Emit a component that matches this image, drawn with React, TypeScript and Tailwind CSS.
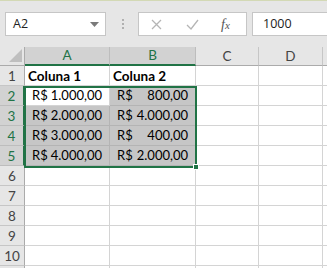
import React from 'react';

type Money = { v: string };

const data: Money[][] = [
  [{ v: '1.000,00' }, { v: '800,00' }],
  [{ v: '2.000,00' }, { v: '4.000,00' }],
  [{ v: '3.000,00' }, { v: '400,00' }],
  [{ v: '4.000,00' }, { v: '2.000,00' }],
];

const cols = ['A', 'B', 'C', 'D'];

const MoneyCell: React.FC<{ value: string; active?: boolean }> = ({ value, active }) => (
  <div
    className={`flex items-center justify-between gap-[3px] px-[7px] pt-[1px] border-b border-r text-[13px] text-black whitespace-nowrap ${
      active ? 'bg-white border-[#d4d4d4]' : 'bg-[#c6c6c6] border-[#b4b4b4]'
    }`}
  >
    <span>R$</span>
    <span>{value}</span>
  </div>
);

const RowHead: React.FC<{ n?: number; sel?: boolean }> = ({ n, sel }) => (
  <div
    className={`flex items-center justify-center pt-[1px] border-b text-[13.5px] ${
      sel
        ? 'bg-[#d2d2d2] text-[#217346] border-b-[#bdbdbd] border-r-2 border-r-[#217346]'
        : 'bg-[#e6e6e6] text-[#444] border-b-[#c6c6c6] border-r border-r-[#ababab]'
    }`}
  >
    {n}
  </div>
);

const Empty: React.FC = () => <div className="border-b border-r border-[#d4d4d4] bg-white" />;

export default function App() {
  return (
    <div className="relative w-[327px] h-[268px] overflow-hidden bg-[#e6e6e6] font-['Lato','Liberation_Sans',sans-serif] border-t border-[#d3d9b5]">
      {/* formula bar */}
      <div className="flex items-center h-[46px] pl-[5px] py-[11px]">
        <div className="flex items-center justify-between w-[101px] h-[24px] bg-white border border-[#c6c6c6] pl-[7px] pr-[6px]">
          <span className="text-[12.5px] text-[#222] font-['Open_Sans',sans-serif]">A2</span>
          <svg width="9" height="5" viewBox="0 0 9 5">
            <path d="M0 0 L9 0 L4.5 5 Z" fill="#7a7a7a" />
          </svg>
        </div>
        <div className="flex flex-col gap-[2px] ml-[16px] mr-[14px]">
          <span className="w-[2px] h-[2px] bg-[#b0b0b0]" />
          <span className="w-[2px] h-[2px] bg-[#b0b0b0]" />
          <span className="w-[2px] h-[2px] bg-[#b0b0b0]" />
        </div>
        <div className="flex items-center w-[109px] h-[24px] bg-white border border-[#c6c6c6]">
          <svg className="ml-[12px]" width="11" height="11" viewBox="0 0 11 11">
            <path d="M1 1 L10 10 M10 1 L1 10" stroke="#b5b5b5" strokeWidth="1.3" />
          </svg>
          <svg className="ml-[24px]" width="13" height="11" viewBox="0 0 13 11">
            <path d="M1 6 L5 10 L12 1" stroke="#b5b5b5" strokeWidth="1.3" fill="none" />
          </svg>
          <span className="ml-[22px] text-[14px] italic text-[#555] font-['Liberation_Serif',serif]">
            f<span className="text-[11px]">x</span>
          </span>
        </div>
        <div className="flex items-center flex-1 h-[24px] ml-[5px] bg-white border border-[#c6c6c6] border-r-0 pl-[10px]">
          <span className="text-[12.5px] text-[#222] font-['Open_Sans',sans-serif]">1000</span>
        </div>
      </div>

      {/* grid */}
      <div className="grid grid-cols-[25px_85px_86px_63px_64px_4px] grid-rows-[19px_repeat(11,20px)] bg-white">
        <div className="relative bg-[#e6e6e6] border-b border-r border-[#ababab]">
          <svg className="absolute right-[2px] bottom-[3px]" width="13" height="13" viewBox="0 0 13 13">
            <path d="M13 0 L13 13 L0 13 Z" fill="#bfbfbf" />
          </svg>
        </div>
        {cols.map((c, i) => (
          <div
            key={c}
            className={`flex items-center justify-center text-[13.5px] border-r ${
              i < 2
                ? 'bg-[#d2d2d2] text-[#217346] border-b-2 border-b-[#217346] border-r-[#bdbdbd]'
                : 'bg-[#e6e6e6] text-[#444] border-b border-b-[#ababab] border-r-[#c6c6c6]'
            }`}
          >
            {c}
          </div>
        ))}
        <div className="bg-[#e6e6e6] border-b border-[#ababab]" />

        {/* row 1 */}
        <RowHead n={1} />
        <div className="flex items-center pl-[3px] pt-[1px] border-b border-r border-[#d4d4d4] text-[13.5px] font-bold text-black whitespace-nowrap">
          Coluna 1
        </div>
        <div className="flex items-center pl-[3px] pt-[1px] border-b border-r border-[#d4d4d4] text-[13.5px] font-bold text-black whitespace-nowrap">
          Coluna 2
        </div>
        <Empty />
        <Empty />
        <div className="border-b border-[#d4d4d4]" />

        {data.map((r, ri) => (
          <React.Fragment key={ri}>
            <RowHead n={ri + 2} sel />
            <MoneyCell value={r[0].v} active={ri === 0} />
            <MoneyCell value={r[1].v} />
            <Empty />
            <Empty />
            <div className="border-b border-[#d4d4d4]" />
          </React.Fragment>
        ))}

        {[6, 7, 8, 9, 10, 0].map((n) => (
          <React.Fragment key={n}>
            <RowHead n={n || undefined} />
            <Empty />
            <Empty />
            <Empty />
            <Empty />
            <div className="border-b border-[#d4d4d4]" />
          </React.Fragment>
        ))}
      </div>

      {/* selection outline A2:B5 */}
      <div className="absolute left-[24px] top-[85px] w-[173px] h-[82px] border-2 border-[#217346] pointer-events-none" />
      <div className="absolute left-[193px] top-[163px] w-[6px] h-[6px] bg-[#217346] border border-white pointer-events-none" />
    </div>
  );
}
